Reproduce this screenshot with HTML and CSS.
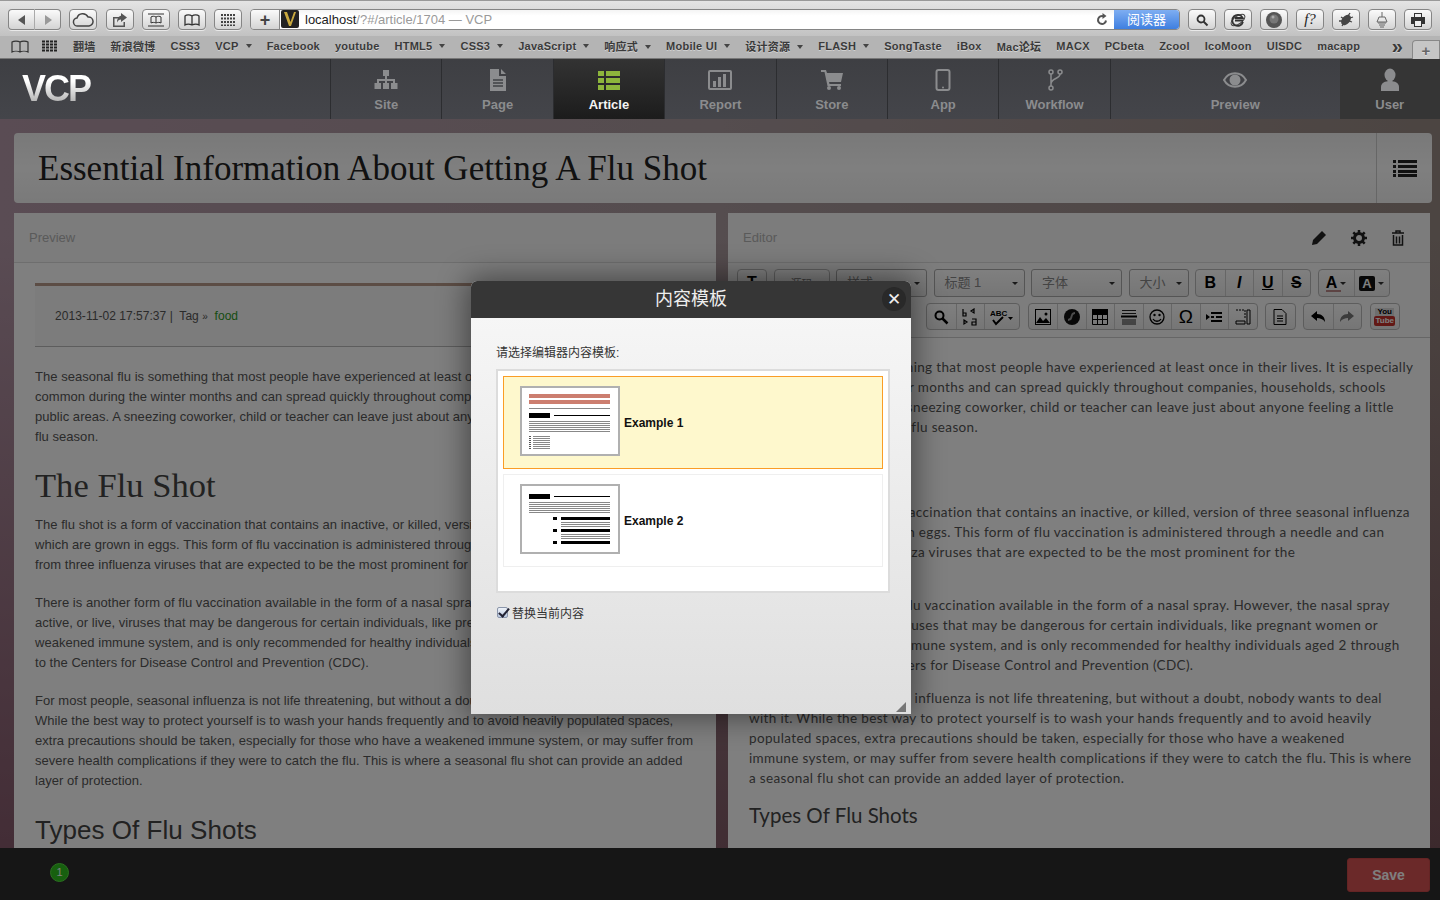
FILE: index.html
```html
<!DOCTYPE html>
<html>
<head>
 <meta charset="utf-8">
 <title>VCP</title>
 <link rel="stylesheet" href="styles.css">
</head>
<body>
 <div class="toolbar">
  <div class="btn-group back">
   <button class="tbtn"><svg width="12" height="12"><path d="M9 1v10L2 6z" fill="#555"/></svg></button>
   <button class="tbtn"><svg width="12" height="12"><path d="M3 1v10l7-5z" fill="#999"/></svg></button>
  </div>
  <button class="tbtn w28"><svg width="22" height="14" viewBox="0 0 22 14"><path d="M6 13a4 4 0 0 1-1-8 6 6 0 0 1 11-1 4.500 4.500 0 0 1 1 9z" fill="none" stroke="#444" stroke-width="1.500"/></svg></button>
  <button class="tbtn w28 gap9"><svg width="16" height="14" viewBox="0 0 16 14"><path d="M1 4h6v1.500H2.500v7h9V9H13v5H1z" fill="#555"/><path d="M9 0l6 4.500L9 9V6.500C7 6.500 6 7.500 5 9.500 5 6 6.500 3 9 2.700z" fill="#555"/></svg></button>
  <button class="tbtn w28 gap8"><svg width="18" height="14" viewBox="0 0 18 14"><path d="M1 1h16M1 13h16" stroke="#333"/><path d="M9 4C7.500 3 5 3 4 4v6c1-.8 3.500-.8 5 0 1.500-.8 4-.8 5 0V4c-1-1-3.500-1-5 0zM9 4v6" fill="none" stroke="#333"/></svg></button>
  <button class="tbtn w28 gap8"><svg width="18" height="14" viewBox="0 0 18 14"><path d="M9 3C7 1.500 3.500 1.500 2 3v9c1.500-1 5-1 7 0 2-1 5.500-1 7 0V3C14.500 1.500 11 1.500 9 3zM9 3v9" fill="none" stroke="#333" stroke-width="1.300"/></svg></button>
  <button class="tbtn w28 gap8"><svg width="14" height="12" viewBox="0 0 14 12"><path d="M0 1h14M0 4.500h14M0 8h14M0 11.500h14" stroke="#444" stroke-width="2" stroke-dasharray="2 1"/></svg></button>
  <div class="addr-wrap">
   <button class="plus">+</button>
   <div class="addr">
    <span class="favicon"><svg width="18" height="18" viewBox="0 0 18 18"><rect width="18" height="18" rx="2" fill="#222"/><path d="M3 2l5 14h2l5-14h-2l-3.500 10L6 2z" fill="#c9a93f"/></svg></span>
    <span class="url"><b>localhost</b>/?#/article/1704 — VCP</span>
    <svg class="reload" width="12" height="13" viewBox="0 0 12 13"><path d="M10 7.500A4 4 0 1 1 7.500 3.200" fill="none" stroke="#555" stroke-width="2"/><path d="M6.500 0l4 3-4 3z" fill="#555"/></svg>
    <span class="reader">阅读器</span>
   </div>
  </div>
  <button class="tbtn w28"><svg width="14" height="14" viewBox="0 0 14 14"><circle cx="6" cy="6" r="3.500" fill="none" stroke="#333" stroke-width="1.800"/><path d="M8.500 8.500l4 4" stroke="#333" stroke-width="2"/></svg></button>
  <button class="tbtn w28 gap8"><svg width="18" height="18" viewBox="0 0 18 18"><ellipse cx="9" cy="9" rx="8" ry="4" transform="rotate(-35 9 9)" fill="none" stroke="#444"/><path d="M14 11a5.500 5.500 0 1 1-.3-4H6M6 9.500h8" fill="none" stroke="#333" stroke-width="1.800"/></svg></button>
  <button class="tbtn w28 gap8"><svg width="18" height="18" viewBox="0 0 18 18"><circle cx="9" cy="9" r="8" fill="#555"/><circle cx="9" cy="8" r="4.500" fill="#777"/><circle cx="8" cy="6" r="1.500" fill="#aaa"/></svg></button>
  <button class="tbtn w28 gap8 fq">f?</button>
  <button class="tbtn w28 gap8"><svg width="18" height="18" viewBox="0 0 18 18"><ellipse cx="9" cy="9" rx="4" ry="6" transform="rotate(40 9 9)" fill="#444"/><path d="M4 6l3 2M2 10l4 0M5 15l2-3M13 2l-2 3M16 6l-3 1M15 11l-3-1" stroke="#444" stroke-width="1.300"/></svg></button>
  <button class="tbtn w28 gap8"><svg width="14" height="18" viewBox="0 0 14 18"><path d="M7 1v5M4 6h6l2 5H2zM3 12h8M4 14h6M5 16h4" fill="none" stroke="#666"/></svg></button>
  <button class="tbtn w28 gap8"><svg width="16" height="16" viewBox="0 0 16 16"><path d="M4 1h8v4H4zM1 5h14v7h-3v3H4v-3H1z" fill="#333"/><rect x="5" y="9" width="6" height="5" fill="#eee"/><rect x="5" y="2" width="6" height="3" fill="#eee"/></svg></button>
 </div>
 <div class="bookmarks">
  <svg class="bm-icon" width="18" height="13" viewBox="0 0 18 13"><path d="M9 2C7 .7 3 .7 1 2v10c2-1 6-1 8 0 2-1 6-1 8 0V2C15 .7 11 .7 9 2zM9 2v10" fill="none" stroke="#333" stroke-width="1.200"/></svg>
  <svg class="bm-icon grid" width="16" height="12" viewBox="0 0 16 12"><path d="M0 1.500h16M0 4.500h16M0 7.500h16M0 10.500h16" stroke="#222" stroke-width="2" stroke-dasharray="3 1"/></svg>
  <span>翻墙</span><span>新浪微博</span><span>CSS3</span><span class="dd">VCP</span><span>Facebook</span><span>youtube</span><span class="dd">HTML5</span><span class="dd">CSS3</span><span class="dd">JavaScript</span><span class="dd">响应式</span><span class="dd">Mobile UI</span><span class="dd">设计资源</span><span class="dd">FLASH</span><span>SongTaste</span><span>iBox</span><span>Mac论坛</span><span>MACX</span><span>PCbeta</span><span>Zcool</span><span>IcoMoon</span><span>UISDC</span><span>macapp</span>
  <span class="more">»</span>
  <span class="newtab">+</span>
 </div>

 <nav class="nav">
  <div class="brand">VCP</div>
  <a class="nav-item"><svg width="24" height="20" viewBox="0 0 24 20"><path d="M9 0h6v6h-2v3h8v4h2.500v6h-6.500v-6h2v-2h-6v2h2v6H9v-6h2v-2H5v2h2v6H.5v-6H3V9h8V6H9z" fill="currentColor"/></svg>Site</a>
  <a class="nav-item"><svg width="18" height="22" viewBox="0 0 18 22"><path d="M1 0h9v7h7v15H1zM12 0l5 5h-5z" fill="currentColor"/><path d="M4 11h10M4 14h10M4 17h10" stroke="#404145" stroke-width="1.500"/></svg>Page</a>
  <a class="nav-item active"><svg width="24" height="20" viewBox="0 0 24 20"><path d="M1 1h6v5H1zM9 1h14v5H9zM1 8h6v5H1zM9 8h14v5H9zM1 15h6v5H1zM9 15h14v5H9z" fill="currentColor"/></svg>Article</a>
  <a class="nav-item"><svg width="24" height="20" viewBox="0 0 24 20"><rect x="1" y="1" width="22" height="18" rx="1" fill="none" stroke="currentColor" stroke-width="2"/><path d="M5 11h3v6H5zM10 7h3v10h-3zM15 4h3v13h-3z" fill="currentColor"/></svg>Report</a>
  <a class="nav-item"><svg width="22" height="20" viewBox="0 0 22 20"><path d="M0 0h5l1 3h16l-2 9H8l.5 2H20v2H6.500L3.500 2H0z" fill="currentColor"/><circle cx="8" cy="18" r="2" fill="currentColor"/><circle cx="18" cy="18" r="2" fill="currentColor"/></svg>Store</a>
  <a class="nav-item"><svg width="16" height="22" viewBox="0 0 16 22"><rect x="1.500" y="1" width="13" height="20" rx="2" fill="none" stroke="currentColor" stroke-width="2"/><circle cx="8" cy="18.500" r="1" fill="currentColor"/></svg>App</a>
  <a class="nav-item"><svg width="16" height="22" viewBox="0 0 16 22"><circle cx="4" cy="3" r="2" fill="none" stroke="currentColor" stroke-width="1.500"/><circle cx="13" cy="3" r="2" fill="none" stroke="currentColor" stroke-width="1.500"/><circle cx="4" cy="19" r="2" fill="none" stroke="currentColor" stroke-width="1.500"/><path d="M4 5v12M13 5c0 5-9 4-9 10" fill="none" stroke="currentColor" stroke-width="1.500"/></svg>Workflow</a>
  <a class="nav-item wide"><svg width="24" height="18" viewBox="0 0 24 18"><path d="M1 9c5-9 17-9 22 0-5 9-17 9-22 0z" fill="none" stroke="currentColor" stroke-width="2"/><circle cx="12" cy="9" r="5.500" fill="currentColor"/></svg>Preview</a>
  <a class="nav-item user"><svg width="20" height="24" viewBox="0 0 20 24"><ellipse cx="10" cy="7" rx="5.500" ry="6.500" fill="currentColor"/><path d="M1 23v-4c0-4 4-6 9-6s9 2 9 6v4z" fill="currentColor"/></svg>User</a>
 </nav>

 <div class="stage">
  <div class="content">
   <div class="title-card">
    <h1>Essential Information About Getting A Flu Shot</h1>
    <div class="title-side"><svg width="24" height="18" viewBox="0 0 24 18"><path d="M0 1h3v3H0zM5 1h19v3H5zM0 6h3v3H0zM5 6h19v3H5zM0 11h3v3H0zM5 11h19v3H5zM0 15h3v3H0zM5 15h19v3H5z" fill="#222"/></svg></div>
   </div>
   <div class="panels">
    <section class="panel">
     <div class="panel-head">Preview</div>
     <div class="preview">
      <div class="meta">2013-11-02 17:57:37 |&nbsp; Tag <small>»</small>&nbsp; <a>food</a></div>
      <p>The seasonal flu is something that most people have experienced at least once in their lives. It is especially<br>common during the winter months and can spread quickly throughout companies, households, schools and other<br>public areas. A sneezing coworker, child or teacher can leave just about anyone feeling a little under the weather during<br>flu season.</p>
      <h2>The Flu Shot</h2>
      <p>The flu shot is a form of vaccination that contains an inactive, or killed, version of three seasonal influenza viruses<br>which are grown in eggs. This form of flu vaccination is administered through a needle and can protect<br>from three influenza viruses that are expected to be the most prominent for the upcoming flu season.</p>
      <p>There is another form of flu vaccination available in the form of a nasal spray. However, the nasal spray contains<br>active, or live, viruses that may be dangerous for certain individuals, like pregnant women or those with a<br>weakened immune system, and is only recommended for healthy individuals aged 2 through 49, according<br>to the Centers for Disease Control and Prevention (CDC).</p>
      <p>For most people, seasonal influenza is not life threatening, but without a doubt, nobody wants to deal with it.<br>While the best way to protect yourself is to wash your hands frequently and to avoid heavily populated spaces,<br>extra precautions should be taken, especially for those who have a weakened immune system, or may suffer from<br>severe health complications if they were to catch the flu. This is where a seasonal flu shot can provide an added<br>layer of protection.</p>
      <h3>Types Of Flu Shots</h3>
     </div>
    </section>
    <section class="panel">
     <div class="panel-head">Editor
      <div class="head-icons">
       <svg width="16" height="16" viewBox="0 0 16 16"><path d="M11 1l4 4-9 9-5 1 1-5z" fill="#222"/></svg>
       <svg width="16" height="16" viewBox="0 0 16 16"><circle cx="8" cy="8" r="4.500" fill="none" stroke="#222" stroke-width="3"/><path d="M8 0v3M8 13v3M0 8h3M13 8h3M2.300 2.300l2.200 2.200M11.500 11.500l2.200 2.200M2.300 13.700l2.200-2.200M11.500 4.500l2.200-2.200" stroke="#222" stroke-width="2.500"/></svg>
       <svg width="14" height="16" viewBox="0 0 14 16"><path d="M1 3h12M5 3V1h4v2M2.500 5v10h9V5M5.500 6.500v7M8.500 6.500v7" fill="none" stroke="#222" stroke-width="1.500"/></svg>
      </div>
     </div>
     <div class="editor-bar">
      <div class="bar-row">
       <div class="tg"><i class="tb t30 glyph">T</i></div>
       <div class="tg"><i class="tb src">源码</i></div>
       <i class="sel w91">样式</i><i class="sel w91">标题 1</i><i class="sel w91">字体</i><i class="sel w60">大小</i>
       <div class="tg"><i class="tb glyph">B</i><i class="tb glyph it">I</i><i class="tb glyph un">U</i><i class="tb glyph st">S</i></div>
       <div class="tg"><i class="tb w36 glyph un red">A<u></u></i><i class="tb w36 glyph bgc"><b>A</b><u></u></i></div>
      </div>
      <div class="bar-row second">
       <div class="tg pushed">
        <i class="tb"><svg width="16" height="16" viewBox="0 0 16 16"><circle cx="6.500" cy="6.500" r="4" fill="none" stroke="#000" stroke-width="2"/><path d="M9.500 9.500l5 5" stroke="#000" stroke-width="2.500"/></svg></i>
        <i class="tb"><svg width="18" height="18" viewBox="0 0 18 18"><path d="M2 1v7M2 5h3v3H2zM10 3l3-2v4zM3 12l3 2-3 2zM11 11h4v6h-4v-3h4" fill="none" stroke="#000" stroke-width="1.200"/></svg></i>
        <i class="tb w36"><svg width="24" height="18" viewBox="0 0 24 18"><text x="0" y="8" font-size="8" font-family="Liberation Sans" font-weight="bold">ABC</text><path d="M3 12l3 4 7-7" fill="none" stroke="#000" stroke-width="2"/><path d="M18 9h5l-2.500 3z" fill="#000"/></svg></i>
       </div>
       <div class="tg">
        <i class="tb"><svg width="16" height="16" viewBox="0 0 16 16"><rect x=".5" y=".5" width="15" height="15" fill="none" stroke="#000"/><path d="M1 14l4-6 3 4 3-3 4 5z" fill="#000"/><circle cx="11" cy="5" r="1.500" fill="#000"/></svg></i>
        <i class="tb"><svg width="16" height="16" viewBox="0 0 16 16"><circle cx="8" cy="8" r="8" fill="#111"/><path d="M11 3C7 3 7 7 6 9l-2 1v2l3-1c2-2 1-6 4-6z" fill="#999"/></svg></i>
        <i class="tb"><svg width="16" height="16" viewBox="0 0 16 16"><path d="M.5.500h15v15H.5zM.5 5.500h15M.5 10.500h15M5.500 5.500v10M10.500 5.500v10" fill="none" stroke="#000"/><rect width="16" height="5" fill="#000"/></svg></i>
        <i class="tb"><svg width="16" height="16" viewBox="0 0 16 16"><path d="M1 1.500h14M1 4.500h14M1 11h14M1 13h14M1 15h14" stroke="#222"/><path d="M0 7.500h16" stroke="#000" stroke-width="2"/></svg></i>
        <i class="tb"><svg width="16" height="16" viewBox="0 0 16 16"><circle cx="8" cy="8" r="7" fill="none" stroke="#000" stroke-width="1.300"/><circle cx="5.500" cy="6" r="1.200"/><circle cx="10.500" cy="6" r="1.200"/><path d="M4 10c2 3 6 3 8 0" fill="none" stroke="#000" stroke-width="1.300"/></svg></i>
        <i class="tb glyph omega">Ω</i>
        <i class="tb"><svg width="16" height="16" viewBox="0 0 16 16"><path d="M0 5l4 3-4 3zM5 3h11v2H5zM5 7h3v2H5zM10 7h6v2h-6zM5 11h11v2H5z"/></svg></i>
        <i class="tb"><svg width="16" height="16" viewBox="0 0 16 16"><path d="M1 1h9v8" fill="none" stroke="#000" stroke-dasharray="2 1"/><path d="M12 1h3v14h-3zM1 12h9v3H1z" fill="none" stroke="#000"/></svg></i>
       </div>
       <div class="tg"><i class="tb"><svg width="14" height="16" viewBox="0 0 14 16"><path d="M1 .500h8l4 4v11H1zM4 7h6M4 9.500h6M4 12h6" fill="none" stroke="#000"/></svg></i></div>
       <div class="tg">
        <i class="tb"><svg width="16" height="14" viewBox="0 0 16 14"><path d="M7 1L1 6l6 5V8c3 0 6 1 8 4 0-5-3-8-8-8z"/></svg></i>
        <i class="tb"><svg width="16" height="14" viewBox="0 0 16 14"><path d="M9 1l6 5-6 5V8C6 8 3 9 1 12c0-5 3-8 8-8z" fill="#777"/></svg></i>
       </div>
       <div class="tg"><i class="tb yt"><b>You</b><em>Tube</em></i></div>
      </div>
     </div>
     <div class="editor-body">
      <p>The seasonal flu is something that most people have experienced at least once in their lives. It is especially<br>common during the winter months and can spread quickly throughout companies, households, schools<br>and other public areas. A sneezing coworker, child or teacher can leave just about anyone feeling a little<br>under the weather during flu season.</p>
      <h2>The Flu Shot</h2>
      <p>The flu shot is a form of vaccination that contains an inactive, or killed, version of three seasonal influenza<br>viruses which are grown in eggs. This form of flu vaccination is administered through a needle and can<br>protect from three influenza viruses that are expected to be the most prominent for the</p>
      <p class="far">There is another form of flu vaccination available in the form of a nasal spray. However, the nasal spray<br>contains active, or live, viruses that may be dangerous for certain individuals, like pregnant women or<br>those with a weakened immune system, and is only recommended for healthy individuals aged 2 through<br>49, according to the Centers for Disease Control and Prevention (CDC).</p>
      <p class="near">For most people, seasonal influenza is not life threatening, but without a doubt, nobody wants to deal<br>with it. While the best way to protect yourself is to wash your hands frequently and to avoid heavily<br>populated spaces, extra precautions should be taken, especially for those who have a weakened<br>immune system, or may suffer from severe health complications if they were to catch the flu. This is where<br>a seasonal flu shot can provide an added layer of protection.</p>
      <h3>Types Of Flu Shots</h3>
     </div>
    </section>
   </div>
  </div>
  <footer class="footbar">
   <span class="badge">1</span>
   <button class="save">Save</button>
  </footer>

  <div class="overlay"></div>

  <div class="modal">
   <div class="modal-head">内容模板<span class="close">✕</span></div>
   <div class="modal-body">
    <div class="modal-label">请选择编辑器内容模板:</div>
    <div class="tpl-list">
     <div class="tpl selected">
      <span class="thumb"><svg width="96" height="66" viewBox="0 0 96 66">
       <path d="M7 8h81M7 14h81" stroke="#cc7e6f" stroke-width="4"/>
       <path d="M7 20.500h81M7 33.500h81M7 35.500h81M7 37.500h81M7 39.500h81M7 41.500h81M7 43.500h81M11 48.500h17M11 50.500h17M11 52.500h17M11 54.500h17M11 56.500h17M11 58.500h17M11 60.500h17" stroke="#888"/>
       <rect x="7" y="25" width="21" height="5"/><path d="M32 27.500h56" stroke="#000"/>
       <path d="M7 48.500h2M7 50.500h2M7 52.500h2M7 54.500h2M7 56.500h2M7 58.500h2M7 60.500h2" stroke="#555"/>
      </svg></span>
      <span class="tpl-name">Example 1</span>
     </div>
     <div class="tpl">
      <span class="thumb"><svg width="96" height="66" viewBox="0 0 96 66">
       <rect x="7" y="8" width="21" height="5"/><path d="M32 10.500h56" stroke="#000"/>
       <path d="M7 16.500h81M7 18.500h81M7 20.500h81M7 22.500h81M7 24.500h81M7 26.500h81M39 36.500h49M39 38.500h49M39 40.500h49M39 48.500h49M39 50.500h49M39 52.500h49" stroke="#888"/>
       <path d="M31 31h4v3h-4zM39 31h49v3H39zM31 43h4v3h-4zM39 43h49v3H39zM31 55h4v3h-4zM39 55h49v3H39z"/>
      </svg></span>
      <span class="tpl-name">Example 2</span>
     </div>
    </div>
    <label class="replace"><input type="checkbox" checked>替换当前内容</label>
   </div>
   <span class="resize"></span>
  </div>
 </div>
</body>
</html>
```

FILE: styles.css
```css
* {
 box-sizing: border-box;
}
html, body {
 margin: 0;
 height: 900px;
 overflow: hidden;
}
body {
 width: 1440px;
 font-family: "Liberation Sans", "Noto Sans CJK SC", sans-serif;
 background: #222;
}
button {
 font-family: inherit;
 padding: 0;
}
i, em {
 font-style: normal;
}

/* browser chrome */
.toolbar {
 height: 36px;
 display: flex;
 align-items: flex-start;
 padding: 8px 0 0 8px;
 background: linear-gradient(#e4e4e4, #c2c2c2);
 border-top: 1px solid #999;
}
.tbtn {
 height: 21px;
 display: flex;
 align-items: center;
 justify-content: center;
 border: 1px solid #858585;
 border-radius: 4px;
 background: linear-gradient(#fafafa, #d4d4d4);
 box-shadow: 0 1px 0 rgba(255,255,255,.6);
}
.btn-group {
 display: flex;
 width: 53px;
 margin-right: 8px;
}
.btn-group .tbtn {
 flex: 1;
}
.btn-group .tbtn:first-child {
 border-right: 0;
 border-radius: 4px 0 0 4px;
}
.btn-group .tbtn:last-child {
 border-left: 1px solid #aaa;
 border-radius: 0 4px 4px 0;
}
.w28 {
 width: 28px;
}
.gap8 {
 margin-left: 8px;
}
.gap9 {
 margin-left: 9px;
}
.fq {
 font: italic 15px "Liberation Serif", serif;
 color: #222;
}
.addr-wrap {
 display: flex;
 width: 930px;
 margin: 0 8px;
 height: 21px;
 border: 1px solid #858585;
 border-radius: 4px;
 overflow: hidden;
}
.plus {
 width: 29px;
 border: 0;
 border-right: 1px solid #888;
 background: linear-gradient(#fafafa, #d4d4d4);
 font: bold 18px/18px "Liberation Sans", sans-serif;
 color: #444;
}
.addr {
 flex: 1;
 display: flex;
 align-items: center;
 background: linear-gradient(#f4f4f4, #fff 30%);
}
.favicon {
 width: 20px;
 height: 19px;
 display: flex;
 justify-content: center;
}
.url {
 margin-left: 5px;
 font-size: 13px;
 color: #9a9a9a;
}
.url b {
 font-weight: normal;
 color: #222;
}
.reload {
 margin: 0 6px 0 auto;
}
.reader {
 width: 65px;
 height: 100%;
 text-align: center;
 font-size: 13px;
 line-height: 20px;
 color: #fff;
 background: linear-gradient(#7eaef2, #3f7fe0);
}
.bookmarks {
 height: 23px;
 display: flex;
 align-items: center;
 gap: 15px;
 padding: 0 0 2px 11px;
 position: relative;
 font: bold 11px "Liberation Sans", "Noto Sans CJK SC", sans-serif;
 letter-spacing: .25px;
 color: #3a3a3a;
 background: #b4b4b4;
 border-bottom: 1px solid #777;
 white-space: nowrap;
 text-shadow: 0 1px 0 rgba(255,255,255,.4);
}
.bookmarks .bm-icon {
 margin-right: -2px;
}
.bookmarks .grid {
 margin-right: 0;
}
.dd::after {
 content: "";
 display: inline-block;
 margin-left: 7px;
 vertical-align: 2px;
 border: 3.5px solid transparent;
 border-top: 4px solid #444;
 border-bottom: 0;
}
.more {
 margin: 0 37px 0 auto;
 font-size: 20px;
 line-height: 16px;
}
.newtab {
 position: absolute;
 right: 0;
 bottom: -1px;
 width: 28px;
 height: 19px;
 text-align: center;
 font-size: 15px;
 line-height: 19px;
 color: #666;
 background: #c6c6c6;
 border: 1px solid #888;
 border-bottom: 0;
 border-radius: 4px 0 0 0;
}

/* app nav */
.nav {
 height: 60px;
 display: flex;
 background: linear-gradient(#3e3f43, #44454a);
}
.brand {
 width: 330px;
 padding: 10px 0 0 22px;
 font: bold 36px/40px "Liberation Sans", sans-serif;
 letter-spacing: -2px;
 color: transparent;
 background: linear-gradient(#fff 30%, #aaa 90%) no-repeat 22px 10px / 75px 40px;
 background-clip: text;
 -webkit-background-clip: text;
}
.nav-item {
 width: 111.400px;
 display: flex;
 flex-direction: column;
 align-items: center;
 gap: 5px;
 padding-top: 9px;
 border-left: 1px solid #2c2d30;
 font-size: 13px;
 font-weight: bold;
 line-height: 16px;
 color: #8b8c8e;
}
.nav-item svg {
 height: 24px;
}
.nav-item.active {
 color: #f4f4f4;
 background: linear-gradient(#333, #1c1c1c);
}
.nav-item.active svg {
 color: #8db53c;
}
.nav-item.wide {
 width: 230px;
 padding-left: 20px;
}
.nav-item.user {
 width: 100px;
 border-left: 0;
 background: #353535;
}

/* page under the dialog */
.stage {
 position: relative;
 height: 781px;
 display: flex;
 flex-direction: column;
 background: linear-gradient(rgba(90,30,50,0) 15%, rgba(90,30,50,.55)), linear-gradient(90deg, #b498a8, #aa9a9e 50%, #988a84);
}
.content {
 height: 729px;
 overflow: hidden;
 padding: 14px 0 0 14px;
}
.title-card {
 width: 1418px;
 height: 70px;
 display: flex;
 justify-content: space-between;
 background: linear-gradient(#f2f2f2, #fff 50%, #f4f4f4);
 border-radius: 4px;
}
h1 {
 margin: 0;
 padding-left: 24px;
 font: normal 35px/72px "Liberation Serif", serif;
 color: #222;
}
.title-side {
 width: 56px;
 display: flex;
 align-items: center;
 justify-content: center;
 border-left: 1px solid #ccc;
}
.panels {
 display: flex;
 gap: 12px;
 margin-top: 10px;
}
.panel {
 width: 702px;
 height: 700px;
 background: #fff;
 border-radius: 4px 4px 0 0;
}
.panel-head {
 height: 50px;
 display: flex;
 align-items: center;
 justify-content: space-between;
 padding: 0 25px 0 15px;
 font-size: 13px;
 color: #b4b4b4;
 background: #f8f8f8;
 border-bottom: 1px solid #ddd;
}
.head-icons {
 display: flex;
 align-items: center;
 gap: 24px;
}
.preview {
 padding: 20px 21px 0;
 font-size: 13px;
 line-height: 20px;
 letter-spacing: .04px;
 color: #565656;
 white-space: nowrap;
}
.meta {
 height: 64px;
 padding: 20px 0 0 20px;
 font-size: 12px;
 border-top: 3px solid #b89a8a;
 border-bottom: 1px solid #bbb;
 background: #f8f8f8;
}
.meta small {
 font-size: 10px;
}
.meta a {
 color: #2f9a26;
}
.preview p {
 margin: 18px 0;
}
.meta + p {
 margin-top: 20px;
}
.preview h2 {
 margin: 18px 0 0;
 font: normal 34.500px/40px "Liberation Serif", serif;
 color: #444;
}
.preview h2 + p {
 margin-top: 10px;
}
.preview h3 {
 margin: 21px 0 0;
 font: normal 26px/36px "Liberation Sans", sans-serif;
 color: #444;
}

/* editor toolbar */
.editor-bar {
 height: 75px;
 padding: 6px 0 0 9px;
 background: #fafafa;
 border-bottom: 1px solid #ccc;
}
.bar-row {
 display: flex;
 gap: 6.500px;
 height: 28px;
}
.bar-row.second {
 gap: 7.500px;
 margin-top: 6px;
 height: 27px;
}
.pushed {
 margin-left: 189px;
}
.tg {
 display: flex;
 border: 1px solid #bbb;
 border-radius: 4px;
 background: linear-gradient(#fff, #ececec);
}
.tb {
 width: 28.500px;
 display: flex;
 align-items: center;
 justify-content: center;
 position: relative;
 border-left: 1px solid #ccc;
 color: #000;
}
.tb:first-child {
 border-left: 0;
}
.t30 {
 width: 28px;
}
.w36 {
 width: 35px;
}
.src {
 width: 54px;
 font-size: 11px;
 color: #777;
}
.glyph {
 font: bold 16px "Liberation Sans", sans-serif;
}
.it {
 font-style: italic;
}
.un {
 text-decoration: underline;
}
.st {
 text-decoration: line-through;
}
.red {
 text-decoration: none;
}
.red u, .bgc u {
 width: 0;
 border: 3px solid transparent;
 border-top: 3px solid #333;
 border-bottom: 0;
 margin-left: 3px;
}
.red::after {
 content: "";
 position: absolute;
 left: 7px;
 bottom: 4px;
 width: 15px;
 height: 2px;
 background: #b88;
}
.bgc b {
 padding: 0 3px;
 font-size: 13px;
 color: #fff;
 background: #111;
 border-radius: 2px;
}
.omega {
 font-size: 19px;
 font-weight: normal;
}
.yt {
 flex-direction: column;
 font: bold 8px/8px "Liberation Sans", sans-serif;
}
.yt b {
 padding: 0 2px;
 background: #ddd;
}
.yt em {
 padding: 1px 1px;
 color: #fff;
 background: #c4302b;
 border-radius: 2px;
}
.sel {
 height: 28px;
 padding-left: 10px;
 font-size: 13px;
 line-height: 26px;
 color: #888;
 position: relative;
 border: 1px solid #aaa;
 border-radius: 3px;
 background: linear-gradient(#fff, #ececec);
}
.sel::after {
 content: "";
 position: absolute;
 right: 6px;
 top: 12px;
 border: 3px solid transparent;
 border-top: 3px solid #333;
 border-bottom: 0;
}
.w91 {
 width: 91px;
}
.w60 {
 width: 60px;
}
.editor-body {
 padding: 19px 21px 0;
 font: 13.500px/20px Lato, sans-serif;
 letter-spacing: .35px;
 color: #565656;
 white-space: nowrap;
}
.editor-body p {
 margin: 0;
}
.editor-body h2 {
 margin: 0;
 height: 65px;
 font: normal 26px/65px Lato, sans-serif;
}
.editor-body .far {
 margin-top: 33px;
}
.editor-body .near {
 margin-top: 13px;
}
.editor-body h3 {
 margin: 12px 0 0;
 font: normal 20.500px/30px Lato, sans-serif;
 letter-spacing: 0;
 color: #444;
}

.footbar {
 flex: 1;
 display: flex;
 align-items: center;
 justify-content: space-between;
 padding: 0 10px 0 50px;
 background: #2c2c2c;
}
.badge {
 width: 19px;
 height: 19px;
 margin-top: -3px;
 text-align: center;
 font-size: 11px;
 line-height: 17px;
 color: #fff;
 background: #2fc01f;
 border: 1px solid #55e040;
 border-radius: 50%;
}
.save {
 width: 83px;
 height: 34px;
 margin-top: 2px;
 font-size: 14px;
 font-weight: bold;
 color: #fff;
 background: #d65252;
 border: 1px solid #c84848;
 border-radius: 3px;
}

/* dialog */
.overlay {
 position: absolute;
 inset: 0;
 background: rgba(0,0,0,.5);
}
.modal {
 position: absolute;
 left: 471px;
 top: 162px;
 width: 440px;
 height: 433px;
 border-radius: 6px 6px 0 0;
 box-shadow: 0 0 30px 4px rgba(0,0,0,.45);
 background: linear-gradient(#f8f8f8, #dfdfdf);
}
.modal-head {
 height: 37px;
 position: relative;
 text-align: center;
 font-size: 18px;
 line-height: 37px;
 color: #eee;
 background: #363636;
 border-radius: 6px 6px 0 0;
}
.close {
 position: absolute;
 left: 411px;
 top: 6px;
 width: 24px;
 height: 24px;
 text-align: center;
 font: bold 17px/24px "DejaVu Sans", sans-serif;
 color: #eee;
 background: #292929;
 border-radius: 50%;
}
.modal-body {
 padding: 27px 21px 0 25px;
 font-size: 12px;
 color: #333;
}
.modal-label {
 height: 16px;
 line-height: 16px;
}
.tpl-list {
 width: 394px;
 height: 224px;
 margin-top: 8px;
 padding: 5px;
 background: #fff;
 border: 2px solid #dcdcdc;
}
.tpl {
 height: 93px;
 display: flex;
 align-items: center;
 gap: 4px;
 padding: 0 0 3px 16px;
 margin-bottom: 5px;
 font-weight: bold;
 color: #111;
 border: 1px solid #efefef;
}
.tpl.selected {
 background: #fef8cd;
 border-color: #fa9d26;
}
.tpl-name {
 margin-top: 3px;
}
.thumb {
 width: 100px;
 height: 70px;
 display: flex;
 background: #fff;
 border: 2px solid #b0b0b0;
}
.replace {
 display: flex;
 align-items: center;
 margin-top: 11px;
 height: 16px;
}
.replace input {
 appearance: none;
 position: relative;
 width: 11px;
 height: 11px;
 margin: 0 4px 0 1px;
 background: linear-gradient(#eef2f8, #b9c8e0);
 border: 1px solid #8b96ab;
 border-radius: 2px;
}
.replace input:checked::after {
 content: "";
 position: absolute;
 left: 2.500px;
 top: -2px;
 width: 4px;
 height: 9px;
 border: solid #223;
 border-width: 0 2px 2px 0;
 transform: rotate(40deg);
}
.resize {
 position: absolute;
 right: 5px;
 bottom: 2px;
 width: 0;
 height: 0;
 border-left: 10px solid transparent;
 border-bottom: 10px solid #777;
}
```
